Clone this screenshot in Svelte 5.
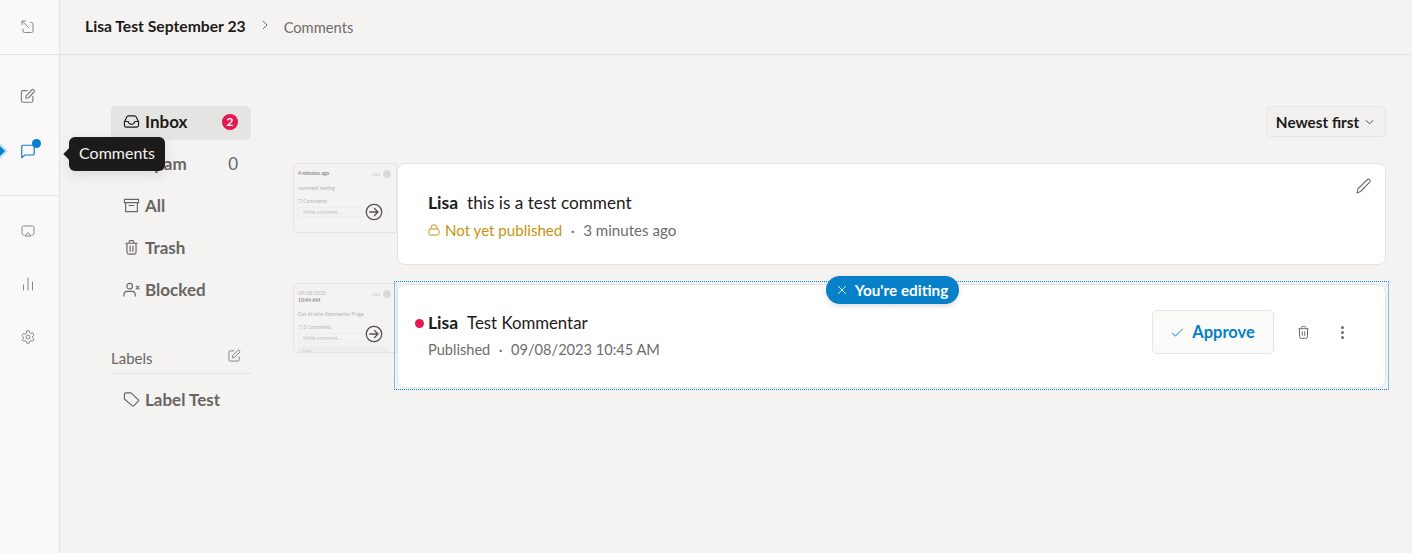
<script>
	const folders = [
		{ icon: 'inbox', label: 'Inbox', badge: 2, active: true },
		{ icon: 'spam', label: 'Spam', count: 0 },
		{ icon: 'all', label: 'All' },
		{ icon: 'trash', label: 'Trash' },
		{ icon: 'blocked', label: 'Blocked' }
	];
</script>

{#snippet folderIcon(name)}
	<svg class="nav-icon" viewBox="0 0 18 18" fill="none" stroke="currentColor" stroke-width="1.2" stroke-linecap="round" stroke-linejoin="round">
		{#if name === 'inbox'}
			<path d="M1.500 9.500 4 4.200Q4.400 3 5.600 3h6.800q1.200 0 1.600 1.200l2.500 5.300v3.500q0 2-2 2H3.500q-2 0-2-2z" />
			<path d="M1.500 9h4q.6 3 3.500 3t3.500-3h4" />
		{:else if name === 'spam'}
			<path d="M4 4h10v10H4z" />
		{:else if name === 'all'}
			<path d="M1.500 2.500h15v3.500h-15zM2.800 6v9.500h12.400V6M6.500 9h5" />
		{:else if name === 'trash'}
			<path d="M3 4.500h12M6.500 4.500V3q0-1.300 1.300-1.300h2.400Q11.500 1.700 11.500 3v1.500M4.200 4.500V14q0 2 2 2h5.600q2 0 2-2V4.500M7.500 7.500v5.500M10.500 7.500v5.500" />
		{:else if name === 'blocked'}
			<circle cx="7" cy="5.500" r="3" />
			<path d="M1 16v-1.500Q1 11 4.500 11h5q3.500 0 3.500 3.500V16M14 5.500l3 3M17 5.500l-3 3" />
		{:else if name === 'tag'}
			<path d="M1.500 3.500q0-1.500 1.500-1.500h5.500l7.800 7.400q.7.700 0 1.400l-5 5q-.7.700-1.400 0L1.500 8.500z" />
		{/if}
	</svg>
{/snippet}

{#snippet thumb(lines, count, tall)}
	<div class="thumb" class:tall>
		<div class="thumb-inner">
			<div class="thumb-head">
				<div class="thumb-time">
					{#each lines as line, i}
						<span class:muted={lines.length > 1 && i === 0}>{line}</span>
					{/each}
				</div>
				<span class="thumb-user">Lisa</span>
				<span class="thumb-avatar"></span>
			</div>
			<p>{tall ? 'Das ist eine Kommentar Frage' : 'comment testing'}</p>
			<p class="thumb-count">☐ {count}</p>
			<div class="thumb-input">Write comment...</div>
			{#if tall}<div class="thumb-input filled">Lisa</div>{/if}
		</div>
		<svg class="thumb-arrow" viewBox="0 0 18 18" fill="none" stroke="#55524f" stroke-width="1.300" stroke-linecap="round" stroke-linejoin="round">
			<circle cx="9" cy="9" r="7.700" />
			<path d="M4.800 9h8M9.500 5.500 13 9l-3.500 3.500" />
		</svg>
	</div>
{/snippet}

<div class="app">
	<aside class="rail">
		<div class="rail-top">
			<svg class="rail-icon small" viewBox="0 0 14 14" fill="none" stroke="#8a8784" stroke-width="1">
				<path d="M5 1H1v4M1 1l7 7M9 2.500h1.500q1.500 0 1.500 1.500v7q0 1.500-1.500 1.500h-7Q2 12.500 2 11V8.500" />
			</svg>
		</div>
		<div class="rail-group main-group">
			<svg class="rail-icon" viewBox="0 0 18 18" fill="none" stroke="#7f7c79" stroke-width="1.300" stroke-linecap="round" stroke-linejoin="round">
				<path d="M8 3H3.500q-2 0-2 2v9q0 2 2 2h9q2 0 2-2V9.500" />
				<path d="M6.500 11.500 7 8.500 13.500 2q1-1 2.200.2t.2 2.300L9.500 11z" />
			</svg>
			<div class="comments-link">
				<span class="marker"></span>
				<svg class="rail-icon" viewBox="0 0 18 18" fill="none" stroke="#0680c8" stroke-width="1.300" stroke-linejoin="round">
					<path d="M3.500 2.500h11q1.500 0 1.500 1.500v8q0 1.500-1.500 1.500H5.500L2 16.500V4q0-1.500 1.500-1.500z" />
				</svg>
				<span class="dot"></span>
				<div class="tooltip">Comments</div>
			</div>
		</div>
		<div class="rail-group lower-group">
			<svg class="rail-icon small" viewBox="0 0 14 14" fill="none" stroke="#8a8784" stroke-width="1" stroke-linejoin="round">
				<path d="M3.500 11H2.500Q1 11 1 9.500v-6Q1 2 2.500 2h9Q13 2 13 3.500v6Q13 11 11.500 11h-1" />
				<path d="M7 8.500 10 12H4z" />
			</svg>
			<svg class="rail-icon small" viewBox="0 0 14 14" fill="none" stroke="#8a8784" stroke-width="1" stroke-linecap="round">
				<path d="M2.500 8v5M7 1v12M11.500 5v8" />
			</svg>
			<svg class="rail-icon small" viewBox="0 0 14 14" fill="none" stroke="#8a8784" stroke-width="1" stroke-linejoin="round">
				<circle cx="7" cy="7" r="2" />
				<path d="M5.800.800h2.400l.4 1.700 1.400.8 1.700-.5 1.200 2.100-1.300 1.200v1.800l1.300 1.200-1.200 2.100-1.700-.5-1.400.8-.4 1.700H5.800l-.4-1.700-1.400-.8-1.700.5L1.100 9.900l1.300-1.200V6.900L1.100 5.700l1.200-2.100 1.700.5 1.400-.8z" />
			</svg>
		</div>
	</aside>

	<div class="page">
		<header>
			<strong>Lisa Test September 23</strong>
			<svg class="crumb-sep" viewBox="0 0 8 10" fill="none" stroke="#6f6c69" stroke-width="1"><path d="M2 1l4 4-4 4" /></svg>
			<span>Comments</span>
		</header>

		<div class="body">
			<nav>
				<ul>
					{#each folders as folder}
						<li class:active={folder.active}>
							{@render folderIcon(folder.icon)}
							<span class="nav-label">{folder.label}</span>
							{#if folder.badge}<span class="badge">{folder.badge}</span>{/if}
							{#if folder.count !== undefined}<span class="count">{folder.count}</span>{/if}
						</li>
					{/each}
				</ul>
				<div class="labels-head">
					<span>Labels</span>
					<svg viewBox="0 0 14 14" fill="none" stroke="#7f7c79" stroke-width="1" stroke-linejoin="round">
						<path d="M6.500 2H2.500Q1 2 1 3.500v8Q1 13 2.500 13h8q1.500 0 1.500-1.500V8" />
						<path d="M4.500 9.500 5 7l5.500-5.500q.8-.7 1.700.1t.3 1.900L7 9z" />
					</svg>
				</div>
				<div class="label-row">
					{@render folderIcon('tag')}
					<span class="nav-label">Label Test</span>
				</div>
			</nav>

			<main>
				<div class="toolbar">
					<button class="sort">Newest first
						<svg viewBox="0 0 10 6" fill="none" stroke="#3d3b39" stroke-width="1"><path d="M1 1l4 4 4-4" /></svg>
					</button>
				</div>

				<div class="row first">
					{@render thumb(['4 minutes ago'], 'Comments', false)}
					<article class="card">
						<div class="line">
							<b>Lisa</b><span>this is a test comment</span>
						</div>
						<div class="meta">
							<svg class="lock" viewBox="0 0 12 12" fill="none" stroke="#c8920f" stroke-width="1"><rect x="1" y="5" width="10" height="6" rx="1.500" /><path d="M3 5V3.500a3 2.700 0 0 1 6 0V5" /></svg>
							<span class="pending">Not yet published</span>
							<span class="sep">·</span>
							<span>3 minutes ago</span>
						</div>
						<svg class="pencil" viewBox="0 0 16 16" fill="none" stroke="#6f6c69" stroke-width="1.100" stroke-linejoin="round"><path d="M1 15l.8-4L11.500 1.500q.9-.8 2 .2t.4 2.200L4.500 13.500z" /></svg>
					</article>
				</div>

				<div class="row">
					{@render thumb(['09/08/2023', '10:44 AM'], '3 Comments', true)}
					<article class="card selected">
						<div class="pill">
							<svg viewBox="0 0 10 10" fill="none" stroke="#d8ecf8" stroke-width="1"><path d="M1 1l8 8M9 1l-8 8" /></svg>
							You're editing
						</div>
						<div class="card-text">
							<div class="line">
								<i class="unread"></i><b>Lisa</b><span>Test Kommentar</span>
							</div>
							<div class="meta">
								<span>Published</span>
								<span class="sep">·</span>
								<span>09/08/2023 10:45 AM</span>
							</div>
						</div>
						<div class="actions">
							<button class="approve">
								<svg viewBox="0 0 14 10" fill="none" stroke="#0680c8" stroke-width="1.100"><path d="M1 5.500 4.500 9 13 1" /></svg>
								Approve
							</button>
							<svg class="bin" viewBox="0 0 18 18" fill="none" stroke="#6f6c69" stroke-width="1.200" stroke-linejoin="round">
								<path d="M3 4.500h12M6.500 4.500V3q0-1.300 1.300-1.300h2.400Q11.500 1.700 11.500 3v1.500M4.200 4.500V14q0 2 2 2h5.600q2 0 2-2V4.500M7.500 7.500v5.500M10.500 7.500v5.500" />
							</svg>
							<div class="kebab"><span></span><span></span><span></span></div>
						</div>
					</article>
				</div>
			</main>
		</div>
	</div>
</div>

<style>
	:global(body) {
		margin: 0;
		background: #f4f3f2;
		color: #1c1b1a;
		font-family: Lato, 'Noto Sans', sans-serif;
	}

	.app {
		display: flex;
		height: 553px;
		overflow: hidden;
	}

	/* Icon rail */
	.rail {
		width: 60px;
		flex: none;
		box-sizing: border-box;
		background: #faf9f8;
		border-right: 1px solid #e4e3e1;
		display: flex;
		flex-direction: column;
	}

	.rail-top {
		height: 54px;
		border-bottom: 1px solid #e4e3e1;
		padding-right: 3px;
		display: flex;
		align-items: center;
		justify-content: center;
	}

	.rail-icon {
		width: 16px;
		height: 16px;
		display: block;
	}

	.rail-icon.small {
		width: 14px;
		height: 14px;
	}

	.rail-group {
		display: flex;
		flex-direction: column;
		align-items: center;
		padding-right: 3px;
	}

	.main-group {
		height: 141px;
		padding-top: 33px;
		box-sizing: border-box;
		gap: 39px;
		border-bottom: 1px solid #e4e3e1;
	}

	.lower-group {
		padding-top: 28px;
		gap: 39px;
	}

	.comments-link {
		position: relative;
	}

	.marker {
		position: absolute;
		left: -27px;
		top: 3px;
		width: 10px;
		height: 10px;
		background: #0680c8;
		box-shadow: 0 0 0 2px #bfe0f4;
		transform: rotate(45deg);
	}

	.dot {
		position: absolute;
		right: -5px;
		top: -4px;
		width: 9px;
		height: 9px;
		border-radius: 50%;
		background: #0680c8;
	}

	.tooltip {
		position: absolute;
		left: 49px;
		top: -6px;
		z-index: 5;
		width: 96px;
		height: 34px;
		background: #1c1b1a;
		color: #f4f3f2;
		border-radius: 6px;
		font-size: 16px;
		line-height: 32px;
		text-align: center;
		box-shadow: 0 4px 14px rgba(0, 0, 0, 0.1);
	}

	.tooltip::before {
		content: '';
		position: absolute;
		left: -4px;
		top: 13px;
		width: 8px;
		height: 8px;
		background: #1c1b1a;
		transform: rotate(45deg);
	}

	/* Page */
	.page {
		flex: 1;
		min-width: 0;
	}

	header {
		height: 54px;
		border-bottom: 1px solid #e4e3e1;
		padding-left: 25px;
		display: flex;
		align-items: center;
		font-size: 14.700px;
		color: #6f6c69;
	}

	header strong {
		color: #1c1b1a;
		font-weight: 700;
		font-size: 15.700px;
		margin-top: -2px;
	}

	header span {
		margin-top: -1px;
	}

	.crumb-sep {
		width: 8px;
		height: 10px;
		margin: -4px 15px 0 15px;
	}

	.body {
		display: flex;
		padding: 51px 26px 0 51px;
	}

	/* Folder list */
	nav {
		width: 140px;
		flex: none;
		margin-right: 42px;
		color: #686562;
	}

	ul {
		list-style: none;
		margin: 0;
		padding: 0;
		display: flex;
		flex-direction: column;
		gap: 8px;
	}

	li,
	.label-row {
		height: 34px;
		padding: 0 13px 4px 12px;
		display: flex;
		align-items: center;
		gap: 5px;
		border-radius: 5px;
		font-size: 17px;
		font-weight: 700;
		box-sizing: border-box;
	}

	li.active {
		background: #e5e4e2;
		color: #1c1b1a;
	}

	.nav-icon {
		width: 17px;
		height: 17px;
		flex: none;
	}

	.nav-label {
		flex: 1;
	}

	.badge {
		width: 16px;
		height: 16px;
		margin-top: 2px;
		border-radius: 50%;
		background: #e4174f;
		color: #fff;
		font-size: 12px;
		line-height: 16px;
		text-align: center;
	}

	.count {
		font-weight: 400;
	}

	.labels-head {
		margin-top: 35px;
		height: 31px;
		box-sizing: border-box;
		padding: 0 10px 0 0;
		border-bottom: 1px solid #e4e3e1;
		display: flex;
		align-items: center;
		justify-content: space-between;
		font-size: 15px;
	}

	.labels-head svg {
		width: 13px;
		height: 13px;
		margin-top: -5px;
	}

	.label-row {
		margin-top: 10px;
	}

	/* Comments */
	main {
		flex: 1;
		min-width: 0;
	}

	.toolbar {
		display: flex;
		justify-content: flex-end;
		height: 31px;
		margin-bottom: 26px;
	}

	.sort {
		width: 120px;
		height: 31px;
		border: 1px solid #e6e5e3;
		border-radius: 5px;
		background: #f1f0ef;
		font: 700 15.300px Lato, sans-serif;
		color: #1c1b1a;
		display: flex;
		align-items: center;
		justify-content: center;
		gap: 6px;
		padding: 0 2px 0 0;
	}

	.sort svg {
		width: 9px;
		height: 6px;
	}

	.row {
		display: flex;
		margin-bottom: 18px;
		align-items: flex-start;
	}

	.thumb {
		position: relative;
		width: 104px;
		height: 70px;
		flex: none;
		box-sizing: border-box;
		border: 1px solid #e6e5e3;
		border-radius: 5px 0 0 5px;
		background: #f4f3f2;
		overflow: hidden;
	}

	.thumb-inner {
		padding: 6px 4px;
		font-size: 5px;
		color: #b5b3b0;
	}

	.thumb-inner p {
		margin: 7px 0 0;
	}

	.thumb-head {
		display: flex;
		align-items: flex-start;
	}

	.thumb-time {
		display: flex;
		flex-direction: column;
		font-weight: 700;
		color: #8f8d8a;
		line-height: 7px;
		flex: 1;
	}

	.thumb-time .muted {
		font-weight: 400;
		color: #bbb9b6;
	}

	.thumb-user {
		color: #cfcdca;
		margin: 1px 3px 0 0;
	}

	.thumb-avatar {
		width: 8px;
		height: 8px;
		border-radius: 50%;
		background: #dcdad8;
		margin-right: 1px;
	}

	.thumb-input {
		margin: 3px 4px 0 0;
		border: 1px solid #eeedeb;
		padding: 1px 4px;
		color: #c4c2bf;
	}

	.thumb-input.filled {
		background: #eeedeb;
	}

	.thumb-arrow {
		position: absolute;
		left: 71px;
		top: 39px;
		width: 18px;
		height: 18px;
	}

	.thumb.tall .thumb-arrow {
		top: 41px;
	}

	.card {
		position: relative;
		flex: 1;
		min-width: 0;
		height: 102px;
		box-sizing: border-box;
		background: #fff;
		border: 1px solid #e4e3e1;
		border-radius: 8px;
		padding: 28px 30px 0;
		font-size: 16.800px;
	}

	.line {
		position: relative;
		display: flex;
		gap: 9px;
		line-height: 22px;
	}

	.first .line span {
		font-size: 17.200px;
	}

	.line b {
		font-size: 17.500px;
		font-weight: 700;
	}

	.meta {
		display: flex;
		align-items: center;
		margin-top: 5px;
		line-height: 22px;
		color: #6f6c69;
		font-size: 14.600px;
	}

	.first .meta {
		font-size: 15.100px;
	}

	.lock {
		width: 12px;
		height: 12px;
		margin-right: 5px;
	}

	.pending {
		color: #c8920f;
	}

	.sep {
		margin: 0 8.500px;
	}

	.pencil {
		position: absolute;
		right: 13px;
		top: 14px;
		width: 16px;
		height: 16px;
	}

	.selected {
		height: 104px;
		margin-top: 1px;
		display: flex;
		align-items: center;
		justify-content: space-between;
		padding: 0 0 0 30px;
	}

	/* dotted selection frame around the card being edited */
	.selected::after {
		content: '';
		position: absolute;
		inset: -4px -4px -3px -4px;
		border-top: 1px dotted #0680c8;
		border-bottom: 1px dotted #0680c8;
		border-left: 1px solid #7fbfe6;
		border-right: 1px solid #7fbfe6;
		pointer-events: none;
	}

	.unread {
		position: absolute;
		left: -13px;
		top: 7px;
		width: 9px;
		height: 9px;
		border-radius: 50%;
		background: #e4174f;
	}

	.pill {
		position: absolute;
		left: 428px;
		top: -9px;
		z-index: 2;
		height: 28px;
		width: 133px;
		box-sizing: border-box;
		border-radius: 14px;
		background: #0680c8;
		color: #fff;
		font-size: 15.300px;
		font-weight: 700;
		display: flex;
		align-items: center;
		justify-content: center;
		gap: 8px;
		box-shadow: 0 2px 5px rgba(0, 0, 0, 0.15);
	}

	.pill svg {
		width: 10px;
		height: 10px;
	}

	.actions {
		display: flex;
		align-items: center;
		margin-top: -8px;
	}

	.approve {
		width: 122px;
		height: 44px;
		border: 1px solid #e6e5e3;
		border-radius: 5px;
		background: #fbfbfa;
		color: #0680c8;
		font: 700 16.500px Lato, sans-serif;
		display: flex;
		align-items: center;
		justify-content: center;
		gap: 8px;
		padding: 0;
	}

	.approve svg {
		width: 13px;
		height: 9px;
	}

	.bin {
		width: 15px;
		height: 15px;
		margin-left: 22px;
	}

	.kebab {
		margin: 0 41px 0 30px;
		display: flex;
		flex-direction: column;
		gap: 2px;
	}

	.kebab span {
		width: 3px;
		height: 3px;
		border-radius: 50%;
		background: #6f6c69;
	}
</style>
